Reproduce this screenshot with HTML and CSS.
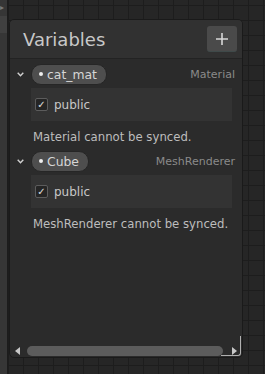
FILE: index.html
```html
<!DOCTYPE html>
<html lang="en">
<head>
  <meta charset="UTF-8">
  <title>Variables</title>
  <link rel="stylesheet" href="styles.css">
</head>
<body>
  <div class="sidebar">
    <span class="sidebar-arrow">&#9656;</span>
    <div class="sidebar-tab"></div>
  </div>

  <div class="canvas">
    <div class="panel">
      <div class="panel-header">
        <h2>Variables</h2>
        <button class="add-btn">
          <svg width="14" height="14" viewBox="0 0 14 14"><path d="M7 1v12M1 7h12" stroke="#d8d8d8" stroke-width="1.6"/></svg>
        </button>
      </div>

      <div class="panel-body">
        <div class="var">
          <div class="var-head">
            <svg class="chevron" width="7" height="5" viewBox="0 0 7 5"><path d="M0.7 0.8L3.5 3.8L6.3 0.8" fill="none" stroke="#d0d0d0" stroke-width="1.4"/></svg>
            <span class="pill"><span class="dot"></span>cat_mat</span>
            <span class="type">Material</span>
          </div>
          <div class="prop">
            <span class="check">&#10003;</span>
            <span>public</span>
          </div>
          <div class="note">Material cannot be synced.</div>
        </div>

        <div class="var">
          <div class="var-head">
            <svg class="chevron" width="7" height="5" viewBox="0 0 7 5"><path d="M0.7 0.8L3.5 3.8L6.3 0.8" fill="none" stroke="#d0d0d0" stroke-width="1.4"/></svg>
            <span class="pill"><span class="dot"></span>Cube</span>
            <span class="type">MeshRenderer</span>
          </div>
          <div class="prop">
            <span class="check">&#10003;</span>
            <span>public</span>
          </div>
          <div class="note">MeshRenderer cannot be synced.</div>
        </div>
      </div>

      <div class="scrollbar">
        <span class="arrow-left"></span>
        <div class="thumb"></div>
        <span class="arrow-right"></span>
        <span class="resize"></span>
      </div>
    </div>
  </div>
</body>
</html>
```

FILE: styles.css
```css
html, body {
  margin: 0;
  height: 100%;
}
body {
  display: flex;
  font-family: 'DejaVu Sans', sans-serif;
  background-color: #262626;
  color: #c4c4c4;
  overflow: hidden;
}
.sidebar {
  width: 7px;
  background-color: #363636;
  border-right: 1px solid #1c1c1c;
  position: relative;
  flex-shrink: 0;
}
.sidebar-arrow {
  position: absolute;
  top: 3px;
  left: 0;
  font-size: 8px;
  color: #777;
}
.sidebar-tab {
  margin-top: 16px;
  height: 17px;
  background-color: #404040;
}
.canvas {
  flex: 1;
  padding: 19px 22px 16px 1px;
  background-color: #262626;
  background-image:
    linear-gradient(#1d1d1d 1px, transparent 1px),
    linear-gradient(90deg, #1d1d1d 1px, transparent 1px);
  background-size: 15px 15px;
  background-position: 0 5px, 15px 0;
  display: flex;
}
.panel {
  flex: 1;
  display: flex;
  flex-direction: column;
  background-color: #2b2b2b;
  border: 1px solid #1a1a1a;
  border-radius: 5px;
  overflow: hidden;
}
.panel-header {
  display: flex;
  align-items: center;
  justify-content: space-between;
  height: 38px;
  padding: 0 5px 0 13px;
  background-color: #313131;
  border-bottom: 1px solid #232323;
}
h2 {
  margin: 0;
  font-size: 18px;
  font-weight: normal;
  color: #c8c8c8;
}
.add-btn {
  display: flex;
  align-items: center;
  justify-content: center;
  width: 30px;
  height: 26px;
  padding: 0;
  border: none;
  border-radius: 3px;
  background-color: #4a4a4a;
  border-bottom: 1px solid #3f4a4a;
}
.panel-body {
  flex: 1;
  padding: 5px 7px 0 6px;
}
.var {
  margin-bottom: 7px;
}
.var-head {
  display: flex;
  align-items: center;
  height: 20px;
}
.chevron {
  margin: 1px 7px 0 1px;
}
.pill {
  display: flex;
  align-items: center;
  height: 19px;
  padding: 0 9px 0 7px;
  border-radius: 10px;
  background-color: #4e4e4e;
  border: 1px solid #262626;
  font-size: 12.4px;
  color: #d6d6d6;
}
.dot {
  width: 4px;
  height: 4px;
  border-radius: 50%;
  background-color: #eee;
  margin-right: 4px;
}
.type {
  margin-left: auto;
  font-size: 11px;
  color: #8a8a8a;
}
.prop {
  display: flex;
  align-items: center;
  height: 33px;
  margin: 4px 3px 0 15px;
  padding-left: 4px;
  background-color: #333;
  font-size: 12px;
  color: #c8c8c8;
}
.check {
  width: 11px;
  height: 11px;
  border: 1px solid #5c5c5c;
  border-radius: 2px;
  background-color: #252525;
  color: #e0e0e0;
  font-size: 10px;
  line-height: 11px;
  text-align: center;
  margin-right: 6px;
}
.note {
  margin: 9px 0 0 17px;
  font-size: 11.7px;
  color: #bdbdbd;
}
.scrollbar {
  position: relative;
  display: flex;
  align-items: center;
  height: 12px;
  padding: 0 5px 0 5px;
}
.arrow-left {
  width: 0;
  height: 0;
  border-top: 4px solid transparent;
  border-bottom: 4px solid transparent;
  border-right: 5px solid #c8c8c8;
  margin-right: 7px;
}
.thumb {
  flex: 1;
  height: 10px;
  border-radius: 5px;
  background-color: #5c5c5c;
}
.arrow-right {
  width: 0;
  height: 0;
  border-top: 4px solid transparent;
  border-bottom: 4px solid transparent;
  border-left: 5px solid #c8c8c8;
  margin-left: 9px;
}
.resize {
  position: absolute;
  right: 1px;
  bottom: 1px;
  width: 19px;
  height: 19px;
  border-right: 1px solid #b0b0b0;
  border-bottom: 1px solid #b0b0b0;
  border-bottom-right-radius: 3px;
}
```
